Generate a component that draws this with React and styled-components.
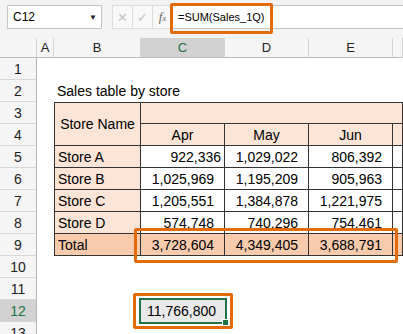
import React from "react";
import styled, { createGlobalStyle } from "styled-components";

const GlobalStyle = createGlobalStyle`
  html, body {
    margin: 0;
    padding: 0;
    background: #ffffff;
  }
  body {
    font-family: "Liberation Sans", Arial, sans-serif;
  }
`;

const Window = styled.div`
  position: relative;
  width: 403px;
  height: 334px;
  overflow: hidden;
  background: #ffffff;
`;

const FormulaBar = styled.div`
  display: flex;
  align-items: flex-start;
  height: 38px;
  padding: 5px 0 0 7px;
  box-sizing: border-box;
  background: #f3f3f3;
`;

const NameBox = styled.div`
  width: 95px;
  height: 24px;
  box-sizing: border-box;
  border: 1px solid #c6c6c6;
  background: #ffffff;
  display: flex;
  align-items: center;
  justify-content: space-between;
  padding: 0 4px 0 5px;
  font-size: 12px;
  color: #000;
`;

const DropArrow = styled.span`
  font-size: 8px;
  color: #222;
`;

const ButtonGroup = styled.div`
  display: flex;
  height: 24px;
  margin-left: 10px;
`;

const BarButton = styled.div`
  width: 20px;
  height: 24px;
  box-sizing: border-box;
  border: 1px solid #dcdcdc;
  border-right: none;
  background: #f8f8f8;
  display: flex;
  align-items: center;
  justify-content: center;
  color: ${(p) => (p.$muted ? "#c4c4c4" : "#555")};
  font-size: 13px;
`;

const FxLabel = styled.span`
  font-family: "Liberation Serif", "Times New Roman", serif;
  font-style: italic;
  font-size: 13px;
  color: #666;
  & small {
    font-size: 9px;
  }
`;

const FormulaInput = styled.div`
  flex: 1;
  height: 24px;
  box-sizing: border-box;
  border-top: 1px solid #c6c6c6;
  border-bottom: 1px solid #c6c6c6;
  background: #ffffff;
  display: flex;
  align-items: center;
  padding-left: 6px;
  font-size: 11px;
  color: #000;
`;

const Sheet = styled.div`
  display: grid;
  grid-template-columns: 37px 17px 87px 84px 84px 84px 1fr;
  grid-template-rows: 20px repeat(13, 22px);
  font-size: 14px;
  color: #000;
`;

const ColHeader = styled.div`
  grid-row: 1;
  grid-column: ${(p) => p.$col};
  box-sizing: border-box;
  border-right: 1px solid #d4d4d4;
  border-bottom: 1px solid #bcbcbc;
  background: ${(p) => (p.$active ? "#d2d2d2" : "#f5f5f5")};
  color: ${(p) => (p.$active ? "#217346" : "#222")};
  display: flex;
  align-items: center;
  justify-content: center;
  font-size: 13px;
`;

const RowHeader = styled.div`
  grid-row: ${(p) => p.$row};
  grid-column: 1;
  box-sizing: border-box;
  border-right: 1px solid #b4b4b4;
  border-bottom: 1px solid #d8d8d8;
  background: ${(p) => (p.$active ? "#d2d2d2" : "#f5f5f5")};
  color: ${(p) => (p.$active ? "#217346" : "#222")};
  display: flex;
  align-items: center;
  justify-content: center;
  font-size: 14px;
`;

const Caption = styled.div`
  grid-row: 3;
  grid-column: 3 / 6;
  display: flex;
  align-items: center;
  padding-left: 3px;
  white-space: nowrap;
`;

const Cell = styled.div`
  grid-row: ${(p) => p.$row};
  grid-column: ${(p) => p.$col};
  box-sizing: border-box;
  border-right: 1px solid #333;
  border-bottom: 1px solid #333;
  border-left: ${(p) => (p.$first ? "1px solid #333" : "none")};
  border-top: ${(p) => (p.$top ? "1px solid #333" : "none")};
  background: ${(p) => p.$bg || "#ffffff"};
  display: flex;
  align-items: center;
  justify-content: ${(p) =>
    p.$align === "right" ? "flex-end" : p.$align === "center" ? "center" : "flex-start"};
  padding: 0 ${(p) => (p.$pad != null ? p.$pad : 3)}px 0 3px;
  white-space: nowrap;
`;

const SelectedCell = styled.div`
  position: relative;
  grid-row: 13;
  grid-column: 4;
  background: #e9e9e9;
  outline: 2px solid #217346;
  display: flex;
  align-items: center;
  justify-content: flex-end;
  padding-right: 9px;

  &::after {
    content: "";
    position: absolute;
    right: -4px;
    bottom: -4px;
    width: 5px;
    height: 5px;
    background: #217346;
    border: 1px solid #ffffff;
  }
`;

const Callout = styled.div`
  position: absolute;
  box-sizing: border-box;
  border: 3px solid #e36c0a;
  border-radius: 2px;
  pointer-events: none;
`;

const PEACH = "#fce4d6";
const TOTAL = "#f8cbad";

const stores = [
  { name: "Store A", values: ["922,336", "1,029,022", "806,392"] },
  { name: "Store B", values: ["1,025,969", "1,195,209", "905,963"] },
  { name: "Store C", values: ["1,205,551", "1,384,878", "1,221,975"] },
  { name: "Store D", values: ["574,748", "740,296", "754,461"] },
];

const totals = ["3,728,604", "4,349,405", "3,688,791"];
const months = ["Apr", "May", "Jun"];
const columns = ["A", "B", "C", "D", "E", ""];

const App = () => {
  return (
    <Window>
      <GlobalStyle />
      <FormulaBar>
        <NameBox>
          C12
          <DropArrow>▼</DropArrow>
        </NameBox>
        <ButtonGroup>
          <BarButton $muted>✕</BarButton>
          <BarButton $muted>✓</BarButton>
          <BarButton>
            <FxLabel>
              f<small>x</small>
            </FxLabel>
          </BarButton>
        </ButtonGroup>
        <FormulaInput>=SUM(Sales_1Q)</FormulaInput>
      </FormulaBar>

      <Sheet>
        <ColHeader $col={1} />
        {columns.map((c, i) => (
          <ColHeader key={i} $col={i + 2} $active={c === "C"}>
            {c}
          </ColHeader>
        ))}
        {Array.from({ length: 13 }, (_, i) => (
          <RowHeader key={i} $row={i + 2} $active={i + 1 === 12}>
            {i + 1}
          </RowHeader>
        ))}

        <Caption>Sales table by store</Caption>

        <Cell $row="4 / 6" $col={3} $first $top $bg={PEACH} $align="center">
          Store Name
        </Cell>
        <Cell $row={4} $col="4 / -1" $top $bg={PEACH} />
        {months.map((m, i) => (
          <Cell key={m} $row={5} $col={i + 4} $bg={PEACH} $align="center">
            {m}
          </Cell>
        ))}
        <Cell $row={5} $col={7} $bg={PEACH} />

        {stores.map((s, r) => (
          <React.Fragment key={s.name}>
            <Cell $row={r + 6} $col={3} $first $bg={PEACH}>
              {s.name}
            </Cell>
            {s.values.map((v, i) => (
              <Cell key={i} $row={r + 6} $col={i + 4} $align="right" $pad={r === 0 && i === 0 ? 3 : 10}>
                {v}
              </Cell>
            ))}
            <Cell $row={r + 6} $col={7} />
          </React.Fragment>
        ))}

        <Cell $row={10} $col={3} $first $bg={TOTAL}>
          Total
        </Cell>
        {totals.map((v, i) => (
          <Cell key={i} $row={10} $col={i + 4} $bg={TOTAL} $align="right" $pad={10}>
            {v}
          </Cell>
        ))}
        <Cell $row={10} $col={7} $bg={TOTAL} />

        <SelectedCell>11,766,800</SelectedCell>
      </Sheet>

      <Callout style={{ left: 170, top: 3, width: 103, height: 31 }} />
      <Callout style={{ left: 134, top: 228, width: 264, height: 35 }} />
      <Callout style={{ left: 133, top: 293, width: 100, height: 36 }} />
    </Window>
  );
};

export default App;
